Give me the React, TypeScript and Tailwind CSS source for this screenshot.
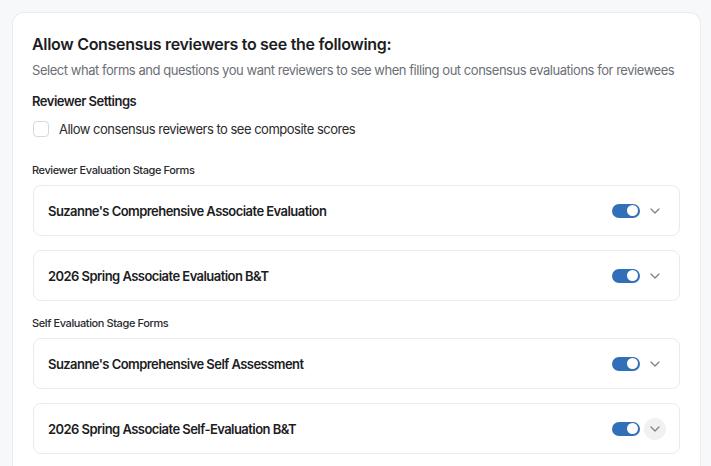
import React from "react";

function Toggle() {
  return (
    <div className="w-[28px] h-[14px] rounded-full bg-[#3170b8] flex items-center justify-end pr-[2px]">
      <div className="w-[11px] h-[11px] rounded-full bg-white" />
    </div>
  );
}

function Chevron({ active }: { active?: boolean }) {
  return (
    <div
      className={
        "w-[22px] h-[22px] rounded-full flex items-center justify-center " +
        (active ? "bg-[#f1f1f2]" : "")
      }
    >
      <svg width="10" height="6" viewBox="0 0 10 6" fill="none">
        <path d="M1 1l4 4 4-4" stroke="#7b7f86" strokeWidth="1.2" strokeLinecap="round" strokeLinejoin="round" />
      </svg>
    </div>
  );
}

function FormRow({ title, active }: { title: string; active?: boolean }) {
  return (
    <div className="h-[51px] rounded-[8px] border border-[#e9ebee] bg-white flex items-center pl-[14px] pr-[13px]">
      <div className="flex-1 text-[13px] tracking-[-0.55px] font-semibold text-[#1d1d1f] leading-[20px]">{title}</div>
      <div className="flex items-center gap-[4px]">
        <Toggle />
        <Chevron active={active} />
      </div>
    </div>
  );
}

export default function App() {
  return (
    <div
      className="min-h-screen bg-[#f7f8fa] pt-[12px] pl-[12px] pr-[10px]"
      style={{ fontFamily: "Inter, 'Noto Sans', sans-serif" }}
    >
      <div className="rounded-t-[12px] border border-b-0 border-[#e9ebef] bg-white pl-[19px] pr-[20px] pt-[19px] pb-[20px]">
        <div className="text-[16px] tracking-[-0.3px] leading-[24px] font-semibold text-[#1d1d1f]">
          Allow Consensus reviewers to see the following:
        </div>
        <div className="mt-[4px] text-[13px] tracking-[-0.46px] leading-[20px] text-[#6b6f76] whitespace-nowrap">
          Select what forms and questions you want reviewers to see when filling out consensus evaluations for reviewees
        </div>
        <div className="mt-[11px] text-[13px] tracking-[-0.5px] leading-[20px] font-semibold text-[#1d1d1f]">Reviewer Settings</div>
        <div className="mt-[8px] flex items-center gap-[10px] h-[20px]">
          <div className="w-[16px] h-[16px] ml-[1px] rounded-[4px] border border-[#d5d8dd] bg-white" />
          <div className="text-[13px] tracking-[-0.5px] leading-[20px] text-[#2a2a2d]">Allow consensus reviewers to see composite scores</div>
        </div>
        <div className="mt-[23px] text-[11px] tracking-[-0.4px] leading-[16px] font-medium text-[#2a2a2d]">Reviewer Evaluation Stage Forms</div>
        <div className="mt-[7px] ml-[1px] flex flex-col gap-[14px]">
          <FormRow title="Suzanne's Comprehensive Associate Evaluation" />
          <FormRow title="2026 Spring Associate Evaluation B&T" />
        </div>
        <div className="mt-[14px] text-[11px] tracking-[-0.4px] leading-[16px] font-medium text-[#2a2a2d]">Self Evaluation Stage Forms</div>
        <div className="mt-[7px] ml-[1px] flex flex-col gap-[14px]">
          <FormRow title="Suzanne's Comprehensive Self Assessment" />
          <FormRow title="2026 Spring Associate Self-Evaluation B&T" active />
        </div>
      </div>
    </div>
  );
}
